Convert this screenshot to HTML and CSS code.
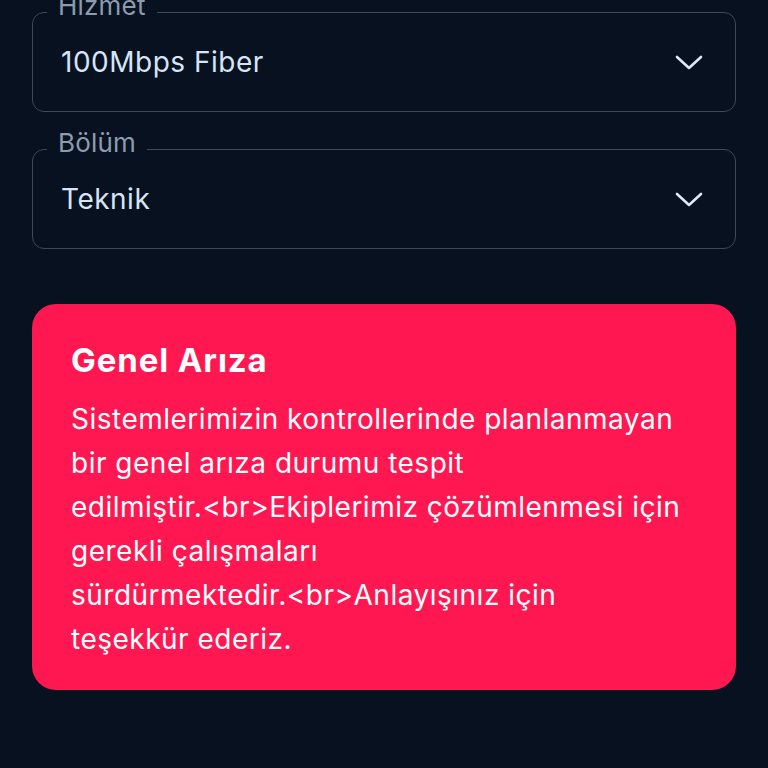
FILE: index.html
```html
<!DOCTYPE html>
<html lang="tr">
<head>
	<meta charset="UTF-8">
	<title>Arıza Bildirimi</title>
	<link rel="stylesheet" href="styles.css">
</head>
<body>
	<div class="page">
		<div class="field">
			<span class="field-label">Hizmet</span>
			<span class="field-value">100Mbps Fiber</span>
			<svg class="chevron" width="28" height="15" viewBox="0 0 28 15"><path d="M2 2l12 11L26 2" fill="none" stroke="#dfe8f4" stroke-width="2.6" stroke-linecap="round" stroke-linejoin="round"/></svg>
		</div>

		<div class="field">
			<span class="field-label">Bölüm</span>
			<span class="field-value">Teknik</span>
			<svg class="chevron" width="28" height="15" viewBox="0 0 28 15"><path d="M2 2l12 11L26 2" fill="none" stroke="#dfe8f4" stroke-width="2.6" stroke-linecap="round" stroke-linejoin="round"/></svg>
		</div>

		<div class="notice">
			<h2 class="notice-title">Genel Arıza</h2>
			<p class="notice-text">Sistemlerimizin kontrollerinde planlanmayan bir genel arıza durumu tespit <span class="nobr">edilmiştir.&lt;br&gt;Ekiplerimiz</span> çözümlenmesi için gerekli çalışmaları <span class="nobr">sürdürmektedir.&lt;br&gt;Anlayışınız</span> için <span class="nobr">teşekkür ederiz.</span></p>
		</div>
	</div>
</body>
</html>
```

FILE: styles.css
```css
*{
	padding: 0;
	margin: 0;
	box-sizing: border-box;
}

body{
	background-color: #07111f;
	font-family: Inter, "Noto Sans", sans-serif;
	width: 768px;
	height: 768px;
	overflow: hidden;
}

.page{
	padding: 12px 32px 0;
}

.field{
	position: relative;
	height: 100px;
	border: 1.5px solid #3a495b;
	border-radius: 12px;
	display: flex;
	align-items: center;
	justify-content: space-between;
	padding: 0 32px 0 28px;
	margin-bottom: 37px;
}

.field-label{
	position: absolute;
	left: 14px;
	top: -20px;
	padding: 0 11px;
	background-color: #07111f;
	color: #8d9bad;
	font-size: 26px;
	line-height: 26px;
	letter-spacing: 0.2px;
}

.field-value{
	color: #d6e4f5;
	font-size: 28px;
	letter-spacing: 0.5px;
}

.chevron{
	display: block;
}

.notice{
	margin-top: 55px;
	background-color: #ff1751;
	border-radius: 24px;
	padding: 36px 40px 29px 39px;
	color: #fff;
}

.notice-title{
	font-size: 33px;
	line-height: 40px;
	font-weight: 700;
	letter-spacing: 0.9px;
	margin-bottom: 17px;
}

.notice-text{
	font-size: 28px;
	line-height: 44px;
	letter-spacing: 0.5px;
}

.nobr{
	white-space: nowrap;
}
```
